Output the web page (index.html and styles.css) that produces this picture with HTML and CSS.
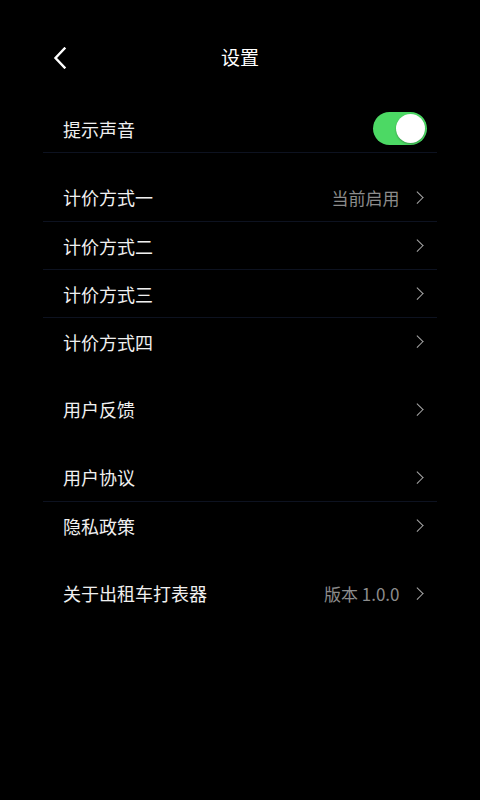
FILE: index.html
```html
<!DOCTYPE html>
<html lang="zh-CN">
<head>
<meta charset="utf-8">
<title>设置</title>
<link rel="stylesheet" href="styles.css">
</head>
<body>
<div class="page">
  <header class="header">
    <span class="back">
      <svg width="14" height="22" viewBox="0 0 14 22"><path d="M11.5 1.5 L2.5 11 L11.5 20.5" fill="none" stroke="#fff" stroke-width="2.4" stroke-linecap="square" stroke-linejoin="miter"/></svg>
    </span>
    <h1 class="title">设置</h1>
    <span></span>
  </header>

  <section class="group">
    <div class="row">
      <span class="label">提示声音</span>
      <span class="switch on"><span class="knob"></span></span>
    </div>
  </section>

  <section class="group">
    <div class="row"><span class="label">计价方式一</span><span class="right"><span class="value">当前启用</span><span class="chev"></span></span></div>
    <div class="row"><span class="label">计价方式二</span><span class="right"><span class="chev"></span></span></div>
    <div class="row"><span class="label">计价方式三</span><span class="right"><span class="chev"></span></span></div>
    <div class="row"><span class="label">计价方式四</span><span class="right"><span class="chev"></span></span></div>
  </section>

  <section class="group">
    <div class="row"><span class="label">用户反馈</span><span class="right"><span class="chev"></span></span></div>
  </section>

  <section class="group">
    <div class="row"><span class="label">用户协议</span><span class="right"><span class="chev"></span></span></div>
    <div class="row"><span class="label">隐私政策</span><span class="right"><span class="chev"></span></span></div>
  </section>

  <section class="group">
    <div class="row"><span class="label">关于出租车打表器</span><span class="right"><span class="value">版本 1.0.0</span><span class="chev"></span></span></div>
  </section>
</div>
</body>
</html>
```

FILE: styles.css
```css
html, body {
  margin: 0;
  padding: 0;
  background: #000;
}
body {
  font-family: "Noto Sans CJK SC", "Noto Sans", sans-serif;
  color: #f2f2f2;
  width: 480px;
  height: 800px;
}
.page {
  padding: 34px 43px 0;
}
.header {
  height: 48px;
  display: grid;
  grid-template-columns: 1fr auto 1fr;
  align-items: center;
  margin-bottom: 23px;
}
.back {
  display: flex;
  align-items: center;
  padding-left: 10px;
}
.back svg { display: block; }
.title {
  margin: 0 0 2px;
  font-size: 19px;
  font-weight: normal;
  color: #fff;
  line-height: 24px;
}
.group {
  margin-bottom: 20px;
}
.group:first-of-type .row {
  border-bottom: 1px solid #0d1220;
}
.row {
  height: 48px;
  box-sizing: border-box;
  display: flex;
  align-items: center;
  justify-content: space-between;
  padding: 0 10px 0 20px;
}
.row + .row {
  border-top: 1px solid #0d1220;
}
.label {
  font-size: 18px;
  line-height: 24px;
  color: #f0f0f0;
}
.right {
  display: flex;
  align-items: center;
}
.value {
  font-size: 17px;
  color: #8c8c8c;
  margin-right: 13px;
}
.chev {
  width: 7.5px;
  height: 7.5px;
  border-top: 1.8px solid #a8a8a8;
  border-right: 1.8px solid #a8a8a8;
  transform: rotate(45deg);
  margin-right: 6px;
}
.switch {
  width: 54px;
  height: 33px;
  border-radius: 17px;
  background: #4cd964;
  position: relative;
  box-sizing: border-box;
}
.switch .knob {
  position: absolute;
  top: 2px;
  right: 2px;
  width: 29px;
  height: 29px;
  border-radius: 50%;
  background: #fff;
  box-shadow: 0 1px 2px rgba(0,0,0,0.3);
}
```
